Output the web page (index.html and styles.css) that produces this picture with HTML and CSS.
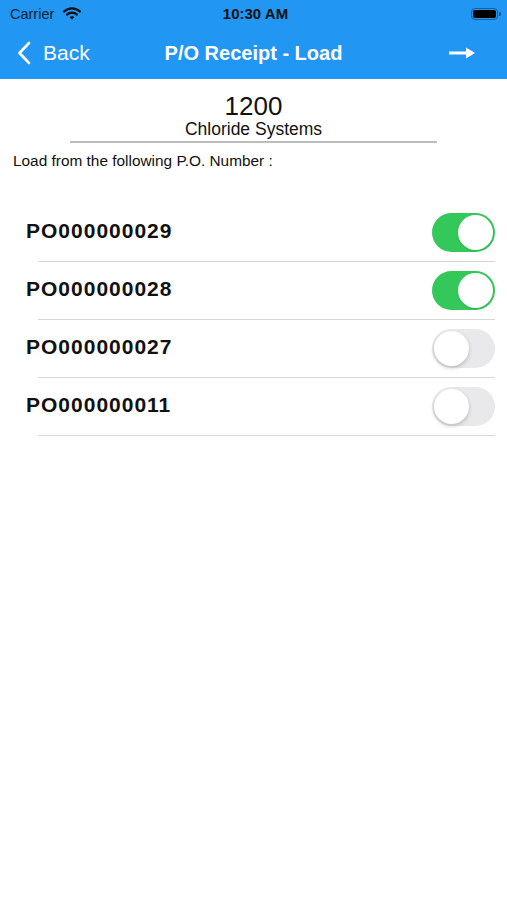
FILE: index.html
```html
<!DOCTYPE html>
<html lang="en">
<head>
    <meta charset="UTF-8">
    <meta name="viewport" content="width=device-width, initial-scale=1.0">
    <title>P/O Receipt - Load</title>
    <link rel="stylesheet" href="styles.css">
</head>
<body>
    <header class="app-header">
        <div class="status-bar">
            <div class="status-left">
                <span class="carrier">Carrier</span>
                <svg class="wifi" width="18" height="13" viewBox="0 0 18 13">
                    <path d="M1 4.6 A11.5 11.5 0 0 1 17 4.6" fill="none" stroke="#111" stroke-width="2.2" stroke-linecap="round"/>
                    <path d="M4 7.6 A7.2 7.2 0 0 1 14 7.6" fill="none" stroke="#111" stroke-width="2.2" stroke-linecap="round"/>
                    <path d="M9 12.6 L6.6 10.3 A3.4 3.4 0 0 1 11.4 10.3 Z" fill="#111"/>
                </svg>
            </div>
            <span class="clock">10:30 AM</span>
            <div class="status-right">
                <span class="battery"><span class="battery-level"></span></span>
                <span class="battery-nub"></span>
            </div>
        </div>
        <nav class="nav-bar">
            <a class="nav-back" href="#">
                <svg width="14" height="24" viewBox="0 0 14 24">
                    <polyline points="12,2 2.5,12 12,22" fill="none" stroke="#fff" stroke-width="2.6" stroke-linecap="round" stroke-linejoin="round"/>
                </svg>
                <span>Back</span>
            </a>
            <h1 class="nav-title">P/O Receipt - Load</h1>
            <a class="nav-next" href="#">
                <svg width="28" height="14" viewBox="0 0 28 14">
                    <line x1="1" y1="7" x2="22" y2="7" stroke="#fff" stroke-width="3"/>
                    <path d="M18 1.5 L27 7 L18 12.5 Z" fill="#fff"/>
                </svg>
            </a>
        </nav>
    </header>

    <main class="content">
        <div class="account">
            <div class="account-code">1200</div>
            <div class="account-name">Chloride Systems</div>
        </div>
        <div class="rule"></div>
        <p class="prompt">Load from the following P.O. Number :</p>

        <ul class="po-list">
            <li class="po-row">
                <span class="po-number">PO000000029</span>
                <span class="switch on"><span class="knob"></span></span>
            </li>
            <li class="po-row">
                <span class="po-number">PO000000028</span>
                <span class="switch on"><span class="knob"></span></span>
            </li>
            <li class="po-row">
                <span class="po-number">PO000000027</span>
                <span class="switch"><span class="knob"></span></span>
            </li>
            <li class="po-row">
                <span class="po-number">PO000000011</span>
                <span class="switch"><span class="knob"></span></span>
            </li>
        </ul>
    </main>
</body>
</html>
```

FILE: styles.css
```css
/* Reset default browser styles */
* {
    box-sizing: border-box;
    margin: 0;
    padding: 0;
}

body {
    font-family: "Liberation Sans", Arial, sans-serif;
    background-color: #fff;
    color: #111;
    width: 507px;
    min-height: 900px;
}

/* Header styles */
.app-header {
    background-color: #2196f3;
    height: 79px;
}

.status-bar {
    height: 27px;
    display: flex;
    align-items: center;
    justify-content: space-between;
    padding: 0 6px 0 10px;
}

.status-left {
    display: flex;
    align-items: center;
    gap: 9px;
    width: 100px;
}

.carrier {
    font-size: 14.5px;
    color: #15222e;
}

.clock {
    font-size: 15px;
    font-weight: bold;
    color: #111;
}

.status-right {
    display: flex;
    align-items: center;
    justify-content: flex-end;
    width: 100px;
}

.battery {
    display: block;
    width: 27px;
    height: 12px;
    border: 1px solid #1f5d94;
    border-radius: 4px;
    padding: 1px;
}

.battery-level {
    display: block;
    height: 100%;
    background-color: #000;
    border-radius: 2px;
}

.battery-nub {
    display: block;
    width: 2px;
    height: 4px;
    margin-left: 1px;
    background-color: #1f5d94;
    border-radius: 0 1px 1px 0;
}

.nav-bar {
    height: 52px;
    display: grid;
    grid-template-columns: 1fr auto 1fr;
    align-items: center;
    padding: 0 17px;
}

.nav-back {
    display: flex;
    align-items: center;
    gap: 12px;
    color: #fff;
    text-decoration: none;
    font-size: 21px;
}

.nav-title {
    font-size: 20px;
    font-weight: bold;
    color: #fff;
}

.nav-next {
    display: flex;
    justify-self: end;
    margin-right: 14px;
}

/* Content styles */
.account {
    text-align: center;
    padding-top: 13px;
}

.account-code {
    font-size: 26px;
    line-height: 28px;
}

.account-name {
    font-size: 17.5px;
    line-height: 19px;
}

.rule {
    height: 2px;
    margin: 2px 70px 0 70px;
    background-color: #bdbdbd;
}

.prompt {
    font-size: 15.4px;
    line-height: 18px;
    margin: 9px 0 0 13px;
}

.po-list {
    list-style: none;
    margin-top: 34px;
}

.po-row {
    display: flex;
    align-items: center;
    justify-content: space-between;
    height: 58px;
    margin: 0 12px 0 38px;
    border-bottom: 1px solid #d8d8d8;
}

.po-number {
    margin-left: -12px;
    margin-bottom: 3px;
    font-size: 21px;
    font-weight: bold;
    letter-spacing: 1px;
}

/* Toggle switch */
.switch {
    display: flex;
    align-items: center;
    width: 63px;
    height: 39px;
    padding: 2px;
    border-radius: 20px;
    background-color: #e9e9eb;
}

.switch .knob {
    width: 35px;
    height: 35px;
    border-radius: 50%;
    background-color: #fff;
    box-shadow: 0 2px 4px rgba(0, 0, 0, 0.2);
}

.switch.on {
    background-color: #34c759;
    justify-content: flex-end;
}

.switch.on .knob {
    box-shadow: 0 1px 2px rgba(0, 0, 0, 0.1);
}
```
